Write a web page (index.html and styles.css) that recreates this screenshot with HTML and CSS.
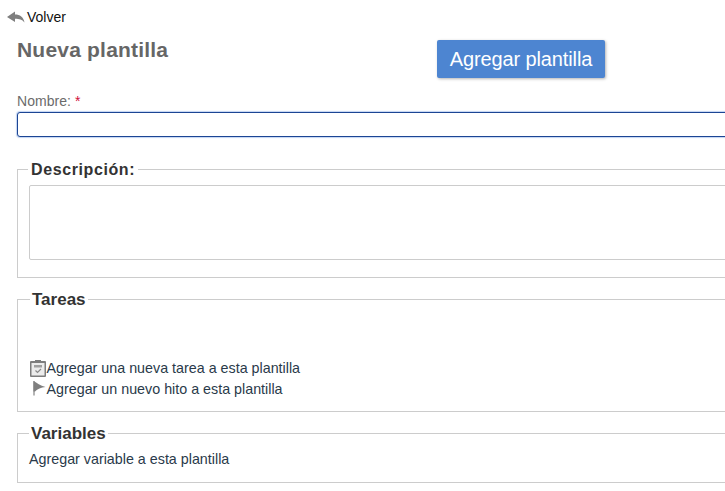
FILE: index.html
```html
<!DOCTYPE html>
<html lang="es">
<head>
<meta charset="utf-8">
<title>Nueva plantilla</title>
<link rel="stylesheet" href="styles.css">
</head>
<body>
<div class="page">
  <a class="back" href="#">
    <svg class="back-icon" width="18" height="12" viewBox="0 0 18 12"><path d="M0 6 L8 0.5 V3.5 C13 3.500 16.500 6 17.500 11.500 C15 8.500 12.500 7.800 8 7.800 V11 Z" fill="#7f7f7f"/></svg>
    <span>Volver</span>
  </a>
  <div class="content">
    <div class="head">
      <h1 class="title">Nueva plantilla</h1>
      <button class="primary" type="button">Agregar plantilla</button>
    </div>
    <label class="field-label" for="nombre">Nombre: <span class="req">*</span></label>
    <input class="name-input" id="nombre" type="text">
    <fieldset class="box box-desc">
      <legend class="legend legend-desc">Descripción:</legend>
      <textarea class="desc-area"></textarea>
    </fieldset>
    <fieldset class="box box-tasks">
      <legend class="legend legend-tasks">Tareas</legend>
      <a class="row" href="#">
        <svg class="row-icon" width="18" height="18" viewBox="0 1 18 18"><path d="M6 0.500h6V2h4a1 1 0 0 1 1 1v14a1 1 0 0 1-1 1H2a1 1 0 0 1-1-1V3a1 1 0 0 1 1-1h4z" fill="#7d7d7d"/><rect x="2.500" y="4" width="13" height="12.500" fill="#ececec"/><path d="M5 6h8v2.500H5z" fill="#a0a0a0"/><path d="M6.500 11.500l2 2 3.500-3.500" fill="none" stroke="#8a8a8a" stroke-width="1.200"/></svg>
        <span>Agregar una nueva tarea a esta plantilla</span>
      </a>
      <a class="row" href="#">
        <svg class="row-icon" width="18" height="18" viewBox="0 1 18 18"><path d="M4 1h2v14.500H4z" fill="#b5b5b5"/><path d="M4.500 1C8 3 11 5.500 16.500 7C12 7.500 8.500 9 6 11.500H4.500z" fill="#7f7f7f"/></svg>
        <span>Agregar un nuevo hito a esta plantilla</span>
      </a>
    </fieldset>
    <fieldset class="box box-vars">
      <legend class="legend legend-vars">Variables</legend>
      <a class="plain" href="#">Agregar variable a esta plantilla</a>
    </fieldset>
  </div>
</div>
</body>
</html>
```

FILE: styles.css
```css
html, body {
  margin: 0;
  padding: 0;
  height: 100%;
  overflow: hidden;
  background: #fff;
}
body {
  font-family: "Liberation Sans", Arial, sans-serif;
  font-size: 14px;
  color: #333;
}
.page {
  width: 1000px;
  padding-top: 8px;
}
a {
  color: #1f2f3f;
  text-decoration: none;
}
.back {
  display: flex;
  align-items: center;
  gap: 2px;
  height: 17px;
  padding-left: 7px;
  color: #111;
  font-size: 14px;
}
.back-icon {
  display: block;
}
.content {
  margin-left: 17px;
  width: 900px;
}
.head {
  display: flex;
  align-items: flex-start;
  height: 68px;
}
.title {
  margin: 11px 0 0;
  width: 420px;
  font-size: 21px;
  line-height: 28px;
  font-weight: bold;
  letter-spacing: 0.2px;
  color: #666;
}
.primary {
  margin-top: 15px;
  width: 168px;
  height: 38px;
  padding: 0;
  border: 0;
  border-radius: 2px;
  background: #4d85d1;
  color: #fff;
  font-family: inherit;
  font-size: 20px;
  letter-spacing: -0.12px;
  box-shadow: 1px 1px 3px rgba(0, 0, 0, 0.3);
}
.field-label {
  display: block;
  height: 19px;
  font-size: 14px;
  line-height: 17px;
  letter-spacing: 0.05px;
  color: #6b6b6b;
}
.req {
  color: #d0103a;
}
.name-input {
  display: block;
  box-sizing: border-box;
  width: 100%;
  height: 25px;
  margin: 0;
  border: 1px solid #1c4594;
  border-radius: 3px;
  box-shadow: 0 0 1px 1px rgba(120, 160, 225, 0.45);
  outline: 0;
  background: #fff;
}
.box {
  box-sizing: border-box;
  width: 100%;
  margin: 0;
  padding: 0 11px;
  border: 1px solid #ccc;
  min-inline-size: 0;
}
.legend {
  font-size: 16px;
  font-weight: bold;
  line-height: 18px;
  padding-top: 2px;
  color: #333;
}
.legend-desc {
  margin-left: -1px;
  padding-left: 3px;
  padding-right: 3px;
  letter-spacing: 0.6px;
}
.legend-tasks {
  margin-left: 1px;
  padding-left: 2px;
  padding-right: 2px;
  font-size: 17px;
}
.legend-vars {
  margin-left: 0;
  padding-left: 2px;
  padding-right: 2px;
  font-size: 17px;
}
.box-desc {
  margin-top: 22px;
  height: 119px;
}
.desc-area {
  display: block;
  box-sizing: border-box;
  width: 100%;
  height: 75px;
  margin-top: 6px;
  border: 1px solid #ccc;
  border-radius: 2px;
  resize: none;
  outline: 0;
}
.box-tasks {
  margin-top: 11px;
  height: 123px;
  padding-top: 49px;
}
.row {
  display: flex;
  align-items: center;
  height: 21px;
  line-height: 21px;
  font-size: 14.3px;
  color: #2a3a4a;
}
.row-icon {
  display: block;
  flex: none;
  margin-right: -0.5px;
}
.box-vars {
  margin-top: 11px;
  height: 60px;
}
.plain {
  display: block;
  margin-top: 8px;
  line-height: 17px;
  font-size: 14.3px;
  color: #2a3a4a;
}
```
